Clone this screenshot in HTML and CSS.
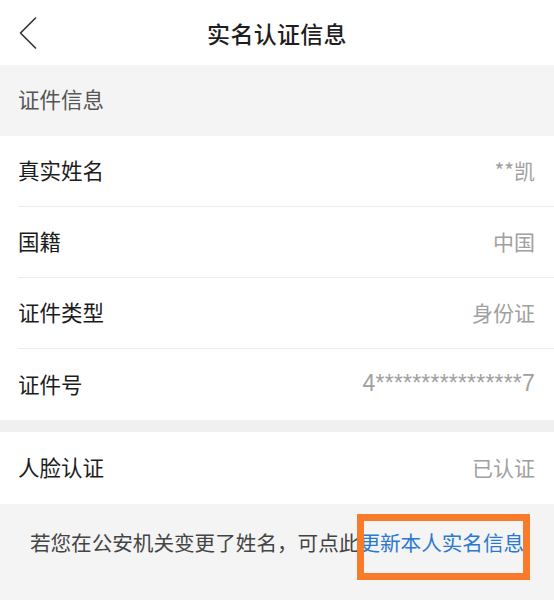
FILE: index.html
```html
<!DOCTYPE html>
<html lang="zh-CN">
<head>
<meta charset="utf-8">
<title>实名认证信息</title>
<link rel="stylesheet" href="styles.css">
</head>
<body>
<div class="page">
  <header class="nav">
    <div class="nav-left">
      <svg class="back" width="18" height="32" viewBox="0 0 18 32" aria-hidden="true">
        <path d="M16.5 1 L1.5 16 L16.5 31" fill="none" stroke="#333" stroke-width="1.6" stroke-linecap="round" stroke-linejoin="round"/>
      </svg>
    </div>
    <h1 class="title">实名认证信息</h1>
    <div class="nav-right"></div>
  </header>

  <div class="section-title">证件信息</div>

  <div class="group">
    <div class="row"><span class="label">真实姓名</span><span class="value">**凯</span></div>
    <div class="row"><span class="label">国籍</span><span class="value">中国</span></div>
    <div class="row"><span class="label">证件类型</span><span class="value">身份证</span></div>
    <div class="row"><span class="label">证件号</span><span class="value id">4****************7</span></div>
  </div>

  <div class="spacer"></div>

  <div class="group">
    <div class="row tall"><span class="label">人脸认证</span><span class="value">已认证</span></div>
  </div>

  <footer class="note">
    若您在公安机关变更了姓名，可点此<span class="link">更新本人实名信息</span>
  </footer>
</div>
</body>
</html>
```

FILE: styles.css
```css
* { box-sizing: border-box; }

html, body {
  margin: 0;
  padding: 0;
  background: #f4f4f4;
}

body {
  font-family: "Noto Sans CJK SC", "Noto Sans", sans-serif;
  color: #1c1c1c;
}

.page {
  width: 554px;
  height: 600px;
  overflow: hidden;
  display: flex;
  flex-direction: column;
}

.nav {
  height: 65px;
  background: #fff;
  display: grid;
  grid-template-columns: 1fr auto 1fr;
  align-items: center;
}

.nav-left {
  padding-left: 19px;
  display: flex;
  align-items: center;
  padding-top: 1px;
}

.back { display: block; }

.title {
  margin: 0;
  font-size: 23px;
  font-weight: 500;
  color: #1e1e1e;
  letter-spacing: 0.3px;
  line-height: 1;
  padding-top: 2px;
}

.section-title {
  height: 71px;
  display: flex;
  align-items: center;
  padding-left: 18px;
  padding-bottom: 4px;
  font-size: 21.5px;
  color: #555;
  background: #f4f4f4;
}

.group {
  background: #fff;
}

.row {
  height: 71px;
  margin-left: 18px;
  padding-right: 19px;
  padding-bottom: 3px;
  border-bottom: 1px solid #ececec;
  display: flex;
  align-items: center;
  justify-content: space-between;
}

.row:last-child { border-bottom: none; }

.row.tall { height: 72px; }

.label {
  font-size: 21.5px;
  color: #1c1c1c;
}

.value {
  font-size: 21px;
  color: #a0a0a0;
}

.value.id {
  font-family: "Liberation Sans", "Noto Sans", sans-serif;
  font-size: 23px;
  letter-spacing: 0.2px;
}

.spacer {
  height: 12px;
  background: #f0f0f0;
}

.note {
  flex: 1;
  background: #f4f4f4;
  padding-top: 23px;
  text-align: center;
  font-size: 20.6px;
  line-height: 30px;
  color: #444;
  white-space: nowrap;
}

.link {
  position: relative;
  color: #2a78d2;
}

.link::after {
  content: "";
  position: absolute;
  left: -2px;
  right: -6px;
  top: -13px;
  bottom: -23px;
  border: 7px solid #f87b2c;
}
```
